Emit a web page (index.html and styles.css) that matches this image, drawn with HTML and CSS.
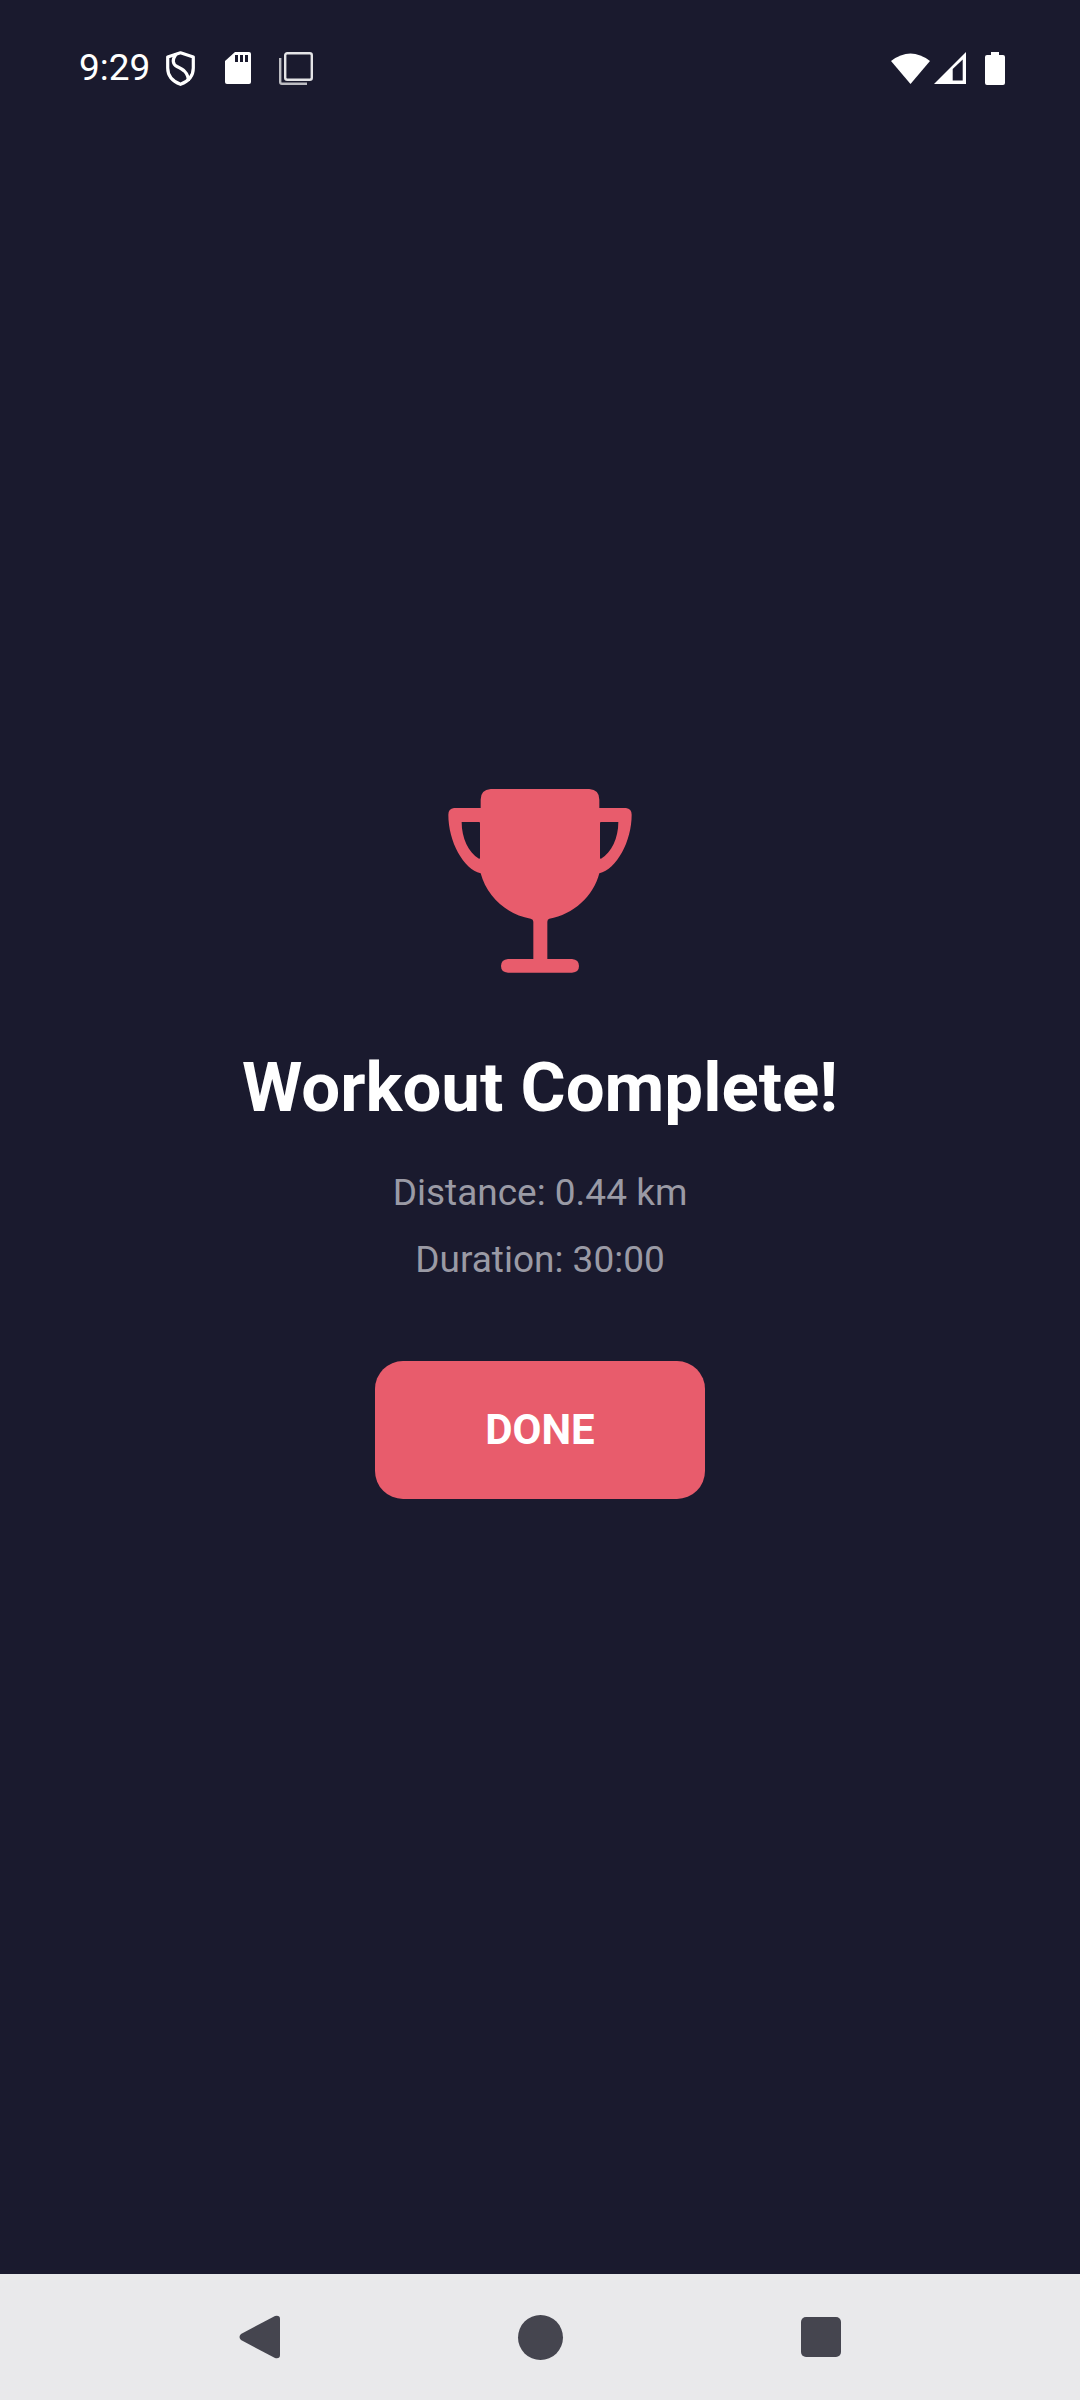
FILE: index.html
```html
<!DOCTYPE html>
<html lang="en">
<head>
    <meta charset="UTF-8">
    <meta name="viewport" content="width=device-width, initial-scale=1.0">
    <title>Workout Complete</title>
    <link rel="stylesheet" href="styles.css">
</head>
<body>
    <div class="screen">
        <div class="status-bar">
            <div class="status-left">
                <span class="time">9:29</span>
                <svg class="icon-shield" viewBox="0 0 29 35" width="29" height="35">
                    <path d="M14.500 1.800 L27.300 6 V17 C27.300 25 22 30.500 14.500 33.300 C7 30.500 1.700 25 1.700 17 V6 Z" fill="none" stroke="#fff" stroke-width="3.200" stroke-linejoin="round"/>
                    <path d="M10 3 C6 9 6.500 13 11 15.500 C17 18.500 22 21 22.500 30" fill="none" stroke="#fff" stroke-width="3.200"/>
                </svg>
                <svg class="icon-sd" viewBox="0 0 26 32" width="26" height="32">
                    <path d="M10 0 H24 Q26 0 26 2 V30 Q26 32 24 32 H2 Q0 32 0 30 V9 Z" fill="#fff"/>
                    <rect x="10" y="3" width="3" height="7" fill="#1a1a2e"/>
                    <rect x="15" y="3" width="3" height="7" fill="#1a1a2e"/>
                    <rect x="20" y="3" width="3" height="7" fill="#1a1a2e"/>
                </svg>
                <svg class="icon-copy" viewBox="0 0 34 33" width="34" height="33">
                    <rect x="6.200" y="1.200" width="26.600" height="26.600" rx="2" fill="none" stroke="#e4e4e6" stroke-width="2.400"/>
                    <path d="M1.200 6 V30 Q1.200 31.800 3 31.800 H28" fill="none" stroke="#bdbdc2" stroke-width="2.400"/>
                </svg>
            </div>
            <div class="status-right">
                <svg class="icon-wifi" viewBox="0 0 39 32" width="39" height="32">
                    <path d="M0 9 Q19.500 -6 39 9 L19.500 32 Z" fill="#fff"/>
                </svg>
                <svg class="icon-signal" viewBox="0 0 32 32" width="32" height="32">
                    <path fill-rule="evenodd" d="M0 32 L32 0 V32 Z M18.700 17 V28.500 H28.700 V7.500 Z" fill="#fff"/>
                </svg>
                <svg class="icon-battery" viewBox="0 0 20 33" width="20" height="33">
                    <path d="M6 0 H14 V3 H18 Q20 3 20 5 V31 Q20 33 18 33 H2 Q0 33 0 31 V5 Q0 3 2 3 H6 Z" fill="#fff"/>
                </svg>
            </div>
        </div>

        <div class="content">
            <div class="trophy-box">
                <svg class="trophy" viewBox="55 58 550 552" width="184" height="184">
                    <path fill-rule="evenodd" d="M182 58 H478 Q508 60 508 90 V115 H588 Q605 117 605 135 C605 215 560 298 508 311 C490 380 430 435 358 447 Q352 449 352 456 V568 H426 Q447 570 447 589 Q447 608 426 609 H234 Q213 608 213 589 Q213 570 234 568 H310 V456 Q310 449 302 447 C230 435 170 380 152 311 C100 298 55 215 55 135 Q55 117 72 115 H152 V90 Q152 60 182 58 Z M513 157 H565 C565 205 545 248 513 267 Q510 268 510 264 V160 Q510 157 513 157 Z M147 157 H95 C95 205 115 248 147 267 Q150 268 150 264 V160 Q150 157 147 157 Z" fill="#e85c6c"/>
                </svg>
            </div>
            <h1 class="title">Workout Complete!</h1>
            <p class="stat">Distance: 0.44 km</p>
            <p class="stat">Duration: 30:00</p>
            <button class="done-btn">DONE</button>
        </div>

        <div class="nav-bar">
            <svg class="nav-back" viewBox="0 0 41 44" width="41" height="44">
                <path d="M41 4 Q41 0 36 1 L2 19 Q-1 22 2 25 L36 43 Q41 44 41 40 Z" fill="#45454f"/>
            </svg>
            <div class="nav-home"></div>
            <div class="nav-recent"></div>
        </div>
    </div>
</body>
</html>
```

FILE: styles.css
```css
body {
    margin: 0;
    background-color: #1a1a2e;
    font-family: Roboto, "Liberation Sans", sans-serif;
}
.screen {
    position: relative;
    display: flex;
    flex-direction: column;
    width: 1080px;
    height: 2400px;
    overflow: hidden;
}
.status-bar {
    position: absolute;
    top: 50px;
    left: 79px;
    right: 75px;
    display: flex;
    justify-content: space-between;
    align-items: center;
    height: 36px;
}
.status-left, .status-right {
    display: flex;
    align-items: center;
}
.time {
    color: white;
    font-size: 37px;
    line-height: 36px;
}
.status-bar svg {
    display: block;
}
.icon-shield { margin-left: 16px; }
.icon-sd { margin-left: 30px; }
.icon-copy { margin-left: 28px; }
.icon-signal { margin-left: 4px; }
.icon-battery { margin-left: 19px; }
.content {
    flex: 1;
    display: flex;
    flex-direction: column;
    align-items: center;
    justify-content: center;
}
.trophy-box {
    display: flex;
    align-items: center;
    justify-content: center;
    width: 210px;
    height: 210px;
}
.title {
    margin: 62px 0 43px;
    color: white;
    font-size: 69px;
    line-height: 80px;
    font-weight: 700;
}
.stat {
    margin: 0 0 23px;
    color: #9a9aa5;
    font-size: 37px;
    line-height: 44px;
}
.done-btn {
    width: 330px;
    height: 138px;
    margin-top: 56px;
    border: none;
    border-radius: 28px;
    background-color: #e85c6c;
    color: white;
    font-family: inherit;
    font-size: 42px;
    font-weight: 700;
}
.nav-bar {
    display: flex;
    justify-content: center;
    align-items: center;
    gap: 238px;
    height: 126px;
    background-color: #e9e9eb;
}
.nav-home {
    width: 45px;
    height: 45px;
    border-radius: 50%;
    background-color: #45454f;
}
.nav-recent {
    width: 40px;
    height: 40px;
    border-radius: 5px;
    background-color: #45454f;
}
```
